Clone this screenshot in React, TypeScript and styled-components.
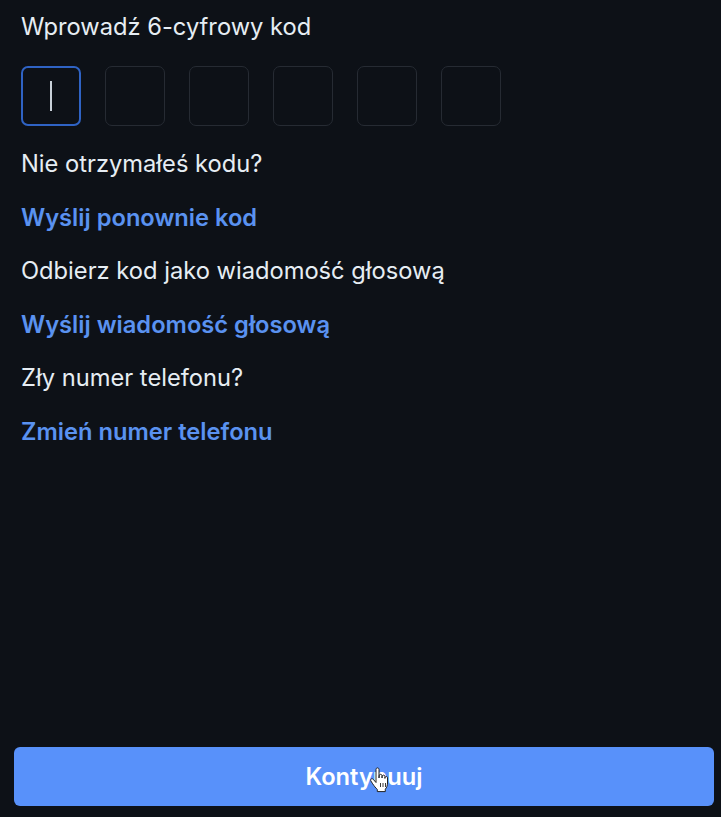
import styled, { createGlobalStyle } from 'styled-components';

const GlobalStyle = createGlobalStyle`
  html, body {
    margin: 0;
    padding: 0;
    background: #0d1117;
  }
  body {
    font-family: Inter, "Noto Sans", "Liberation Sans", sans-serif;
    color: #e6edf3;
  }
  * { box-sizing: border-box; }
`;

const Page = styled.div`
  min-height: 100vh;
  display: flex;
  flex-direction: column;
  padding: 11px 7px 11px 0;
`;

const Content = styled.div`
  flex: 1;
  display: flex;
  flex-direction: column;
  padding-left: 21px;
`;

const Title = styled.div`
  font-size: 23.7px;
  line-height: 32px;
  font-weight: 400;
  color: #e6edf3;
`;

const CodeRow = styled.div`
  display: flex;
  gap: 24px;
  margin-top: 23px;
`;

const CodeBox = styled.div<{ $active?: boolean }>`
  width: 60px;
  height: 60px;
  border-radius: 7px;
  border: ${({ $active }) => ($active ? '2px solid #2f63c4' : '1.5px solid #262b33')};
  background: #0d1117;
  display: flex;
  align-items: center;
  justify-content: center;
`;

const Caret = styled.span`
  width: 1.5px;
  height: 30px;
  background: #c9d1d9;
`;

const Links = styled.div`
  display: flex;
  flex-direction: column;
  gap: 21.6px;
  margin-top: 22px;
`;

const Line = styled.div<{ $link?: boolean }>`
  font-size: 23.7px;
  line-height: 32px;
  font-weight: ${({ $link }) => ($link ? 600 : 400)};
  color: ${({ $link }) => ($link ? '#5a92f0' : '#e6edf3')};
  cursor: ${({ $link }) => ($link ? 'pointer' : 'default')};
`;

const ButtonWrap = styled.div`
  padding-left: 14px;
`;

const Button = styled.button`
  position: relative;
  width: 100%;
  height: 59px;
  border: none;
  border-radius: 6px;
  background: #5891fa;
  color: #ffffff;
  font-family: Inter, "Noto Sans", "Liberation Sans", sans-serif;
  font-size: 23.7px;
  font-weight: 600;
  display: flex;
  align-items: center;
  justify-content: center;
`;

const Pointer = styled.svg`
  position: absolute;
  left: 355px;
  top: 20px;
  width: 22px;
  height: 26px;
`;

const lines: { text: string; link?: boolean }[] = [
  { text: 'Nie otrzymałeś kodu?' },
  { text: 'Wyślij ponownie kod', link: true },
  { text: 'Odbierz kod jako wiadomość głosową' },
  { text: 'Wyślij wiadomość głosową', link: true },
  { text: 'Zły numer telefonu?' },
  { text: 'Zmień numer telefonu', link: true },
];

export default function App() {
  return (
    <>
      <GlobalStyle />
      <Page>
        <Content>
          <Title>Wprowadź 6-cyfrowy kod</Title>
          <CodeRow>
            {[0, 1, 2, 3, 4, 5].map((i) => (
              <CodeBox key={i} $active={i === 0}>
                {i === 0 && <Caret />}
              </CodeBox>
            ))}
          </CodeRow>
          <Links>
            {lines.map((l) => (
              <Line key={l.text} $link={l.link}>
                {l.text}
              </Line>
            ))}
          </Links>
        </Content>
        <ButtonWrap>
          <Button>
            Kontynuuj
            <Pointer viewBox="0 0 22 26">
              <path
                d="M7 2.5c0-1 .7-1.6 1.5-1.6S10 1.5 10 2.5V11l.2-2.3c.1-.9.7-1.4 1.4-1.4s1.3.5 1.4 1.4V11l.2-1.6c.1-.8.7-1.3 1.4-1.3s1.3.5 1.3 1.3v2l.2-.9c.2-.7.7-1 1.3-1 .7.1 1.1.6 1.1 1.3v5.2c0 2.6-.8 4.6-2.2 6.2v2.4H8.3v-2.2c-1.5-1.3-3.300-3.6-4.600-5.600L1.9 14c-.5-.8-.3-1.7.4-2.1.7-.4 1.5-.2 2 .5L7 15.5z"
                fill="#ffffff"
                stroke="#222"
                strokeWidth="1"
                strokeLinejoin="round"
              />
              <path d="M11.5 16v4M14 16v4M16.5 16v4" stroke="#222" strokeWidth="0.9" />
            </Pointer>
          </Button>
        </ButtonWrap>
      </Page>
    </>
  );
}
